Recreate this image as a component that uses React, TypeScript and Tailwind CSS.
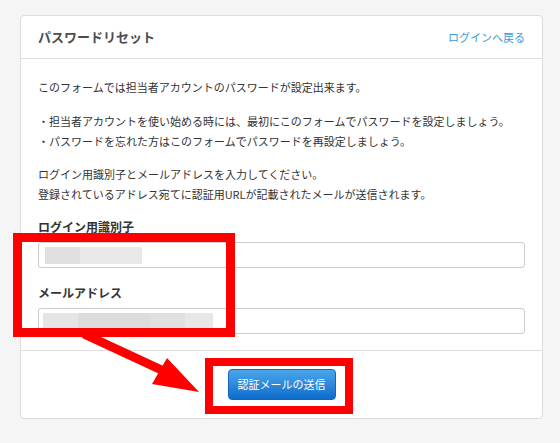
export default function App() {
  return (
    <div className="relative h-[443px] w-[560px] overflow-hidden bg-[#f5f5f5] pt-[15px] pl-[20px] font-['Noto_Sans_CJK_JP','Noto_Sans',sans-serif] text-[#333]">
      <div className="w-[523px] rounded-[4px] border border-[#dddddd] bg-white">
        {/* header */}
        <div className="flex h-[43px] items-center justify-between border-b border-[#dddddd] px-[17px]">
          <h1 className="text-[13px] font-bold text-[#4d4d4d]">パスワードリセット</h1>
          <a className="text-[11px] text-[#3c9ade]">ログインへ戻る</a>
        </div>

        {/* body */}
        <div className="px-[17px] pt-[18px] pb-[16px] text-[11px] leading-[20px]">
          <p>このフォームでは担当者アカウントのパスワードが設定出来ます。</p>
          <p className="mt-[14px]">
            ・担当者アカウントを使い始める時には、最初にこのフォームでパスワードを設定しましょう。
            <br />
            ・パスワードを忘れた方はこのフォームでパスワードを再設定しましょう。
          </p>
          <p className="mt-[13px]">
            ログイン用識別子とメールアドレスを入力してください。
            <br />
            登録されているアドレス宛てに認証用URLが記載されたメールが送信されます。
          </p>

          <label className="mt-[14px] block text-[12px] font-bold leading-[18px]">ログイン用識別子</label>
          <div className="mt-[6px] flex h-[26px] items-center rounded-[3px] border border-[#cccccc] bg-white px-[6px]">
            <div className="flex h-[17px]">
              <div className="w-[35px] bg-[#e0e0e0]" />
              <div className="w-[62px] bg-[#e9e9e9]" />
            </div>
          </div>

          <label className="mt-[16px] block text-[12px] font-bold leading-[18px]">メールアドレス</label>
          <div className="mt-[6px] flex h-[26px] items-center rounded-[3px] border border-[#cccccc] bg-white px-[4px]">
            <div className="flex h-[17px]">
              <div className="w-[35px] bg-[#e5e5e5]" />
              <div className="w-[72px] bg-[#dcdcdc]" />
              <div className="w-[35px] bg-[#e0e0e0]" />
              <div className="w-[28px] bg-[#e7e7e7]" />
            </div>
          </div>
        </div>

        {/* footer */}
        <div className="flex justify-center border-t border-[#dddddd] py-[18px]">
          <button className="h-[31px] w-[108px] rounded-[4px] border border-[#0c67c0] bg-gradient-to-b from-[#4ba6ec] to-[#0a6ccb] text-[11px] text-white">
            認証メールの送信
          </button>
        </div>
      </div>

      {/* red annotations */}
      <div className="absolute left-[13px] top-[233px] h-[104px] w-[222px] border-[9px] border-[#ff0000]" />
      <div className="absolute left-[205px] top-[358px] h-[56px] w-[148px] border-[8px] border-[#ff0000]" />
      <svg className="absolute left-0 top-0" width="560" height="443" viewBox="0 0 560 443">
        <line x1="84" y1="334" x2="168" y2="373" stroke="#ff0000" strokeWidth="9" />
        <polygon points="167,358 152,384 199,392" fill="#ff0000" />
      </svg>
    </div>
  );
}
